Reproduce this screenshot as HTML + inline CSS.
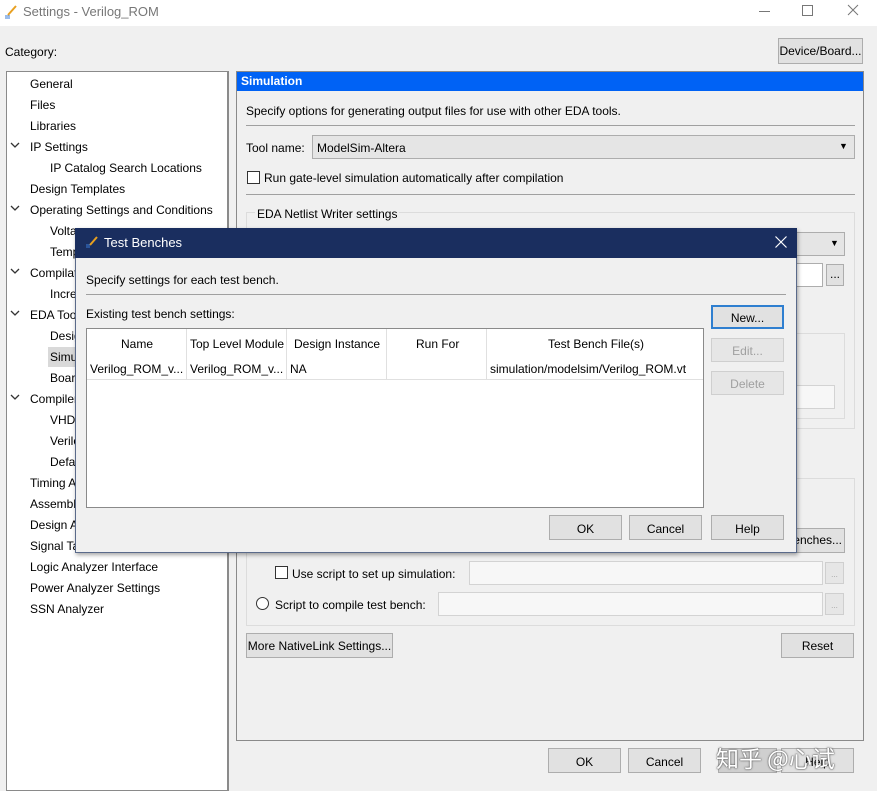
<!DOCTYPE html>
<html><head><style>
*{box-sizing:border-box;margin:0;padding:0}
body{width:877px;height:791px;background:#f0f0f0;font-family:"Liberation Sans","Noto Sans CJK SC",sans-serif;font-size:12px;color:#000;position:relative;overflow:hidden}
.a{position:absolute;white-space:nowrap}
.btn{position:absolute;background:#e1e1e1;border:1px solid #adadad;text-align:center;font-size:12px}
.dis{color:#a0a0a0;background:#e6e6e6;border-color:#cfcfcf}
.fld{position:absolute;background:#f7f7f7;border:1px solid #d3d3d3}
.chk{position:absolute;width:13px;height:13px;border:1px solid #333;background:#fff}
.tree div{position:absolute;white-space:nowrap}
</style></head><body>
<div class="a" style="left:0;top:0;width:877px;height:26px;background:#fff"></div>
<svg class="a" style="left:3px;top:3px" width="16" height="16"><path d="M5 12 L13 3" stroke="#e8a020" stroke-width="2"/><path d="M2 13h5M2 15h5" stroke="#3a7bd5" stroke-width="1"/></svg>
<div class="a" style="left:23px;top:4px;font-size:13px;color:#777">Settings - Verilog_ROM</div>
<svg class="a" style="left:750px;top:0" width="127" height="24"><g stroke="#777" stroke-width="1" fill="none"><path d="M9 11.5h11"/><rect x="52.5" y="5.5" width="10" height="10"/><path d="M98 5l10 10M108 5l-10 10"/></g></svg>
<div class="a" style="left:5px;top:45px">Category:</div>
<div class="btn" style="left:778px;top:38px;width:85px;height:26px;line-height:24px">Device/Board...</div>

<div class="a tree" style="left:6px;top:71px;width:223px;height:720px;background:#fff;border:1px solid #8a8a8a;border-right-width:2px">
<div style="left:23px;top:5px">General</div>
<div style="left:23px;top:26px">Files</div>
<div style="left:23px;top:47px">Libraries</div>
<div style="left:23px;top:68px">IP Settings</div>
<div style="left:43px;top:89px">IP Catalog Search Locations</div>
<div style="left:23px;top:110px">Design Templates</div>
<div style="left:23px;top:131px">Operating Settings and Conditions</div>
<div style="left:43px;top:152px">Voltage</div>
<div style="left:43px;top:173px">Temperature</div>
<div style="left:23px;top:194px">Compilation</div>
<div style="left:43px;top:215px">Incremental</div>
<div style="left:23px;top:236px">EDA Tool</div>
<div style="left:43px;top:257px">Design</div>
<div style="left:41px;top:275px;width:40px;height:20px;background:#d9d9d9"></div>
<div style="left:43px;top:278px">Simulation</div>
<div style="left:43px;top:299px">Board</div>
<div style="left:23px;top:320px">Compiler</div>
<div style="left:43px;top:341px">VHDL</div>
<div style="left:43px;top:362px">Verilog</div>
<div style="left:43px;top:383px">Default</div>
<div style="left:23px;top:404px">Timing Analyzer</div>
<div style="left:23px;top:425px">Assembler</div>
<div style="left:23px;top:446px">Design Assistant</div>
<div style="left:23px;top:467px">Signal Tap</div>
<div style="left:23px;top:488px">Logic Analyzer Interface</div>
<div style="left:23px;top:509px">Power Analyzer Settings</div>
<div style="left:23px;top:530px">SSN Analyzer</div>
</div>
<svg class="a" style="left:10px;top:140px" width="12" height="280"><g stroke="#333" fill="none" stroke-width="1.3"><path d="M1 3l4 4 4-4"/><path d="M1 66l4 4 4-4"/><path d="M1 129l4 4 4-4"/><path d="M1 171l4 4 4-4"/><path d="M1 255l4 4 4-4"/></g></svg>

<div class="a" style="left:236px;top:71px;width:628px;height:670px;border:1px solid #8a8a8a;background:#f0f0f0"></div>
<div class="a" style="left:237px;top:72px;width:626px;height:19px;background:#0062f5;color:#fff;font-weight:bold;padding-left:4px;line-height:19px">Simulation</div>
<div class="a" style="left:246px;top:104px">Specify options for generating output files for use with other EDA tools.</div>
<div class="a" style="left:246px;top:125px;width:609px;height:1px;background:#a0a0a0"></div>
<div class="a" style="left:246px;top:141px">Tool name:</div>
<div class="a" style="left:312px;top:135px;width:543px;height:24px;background:#e5e5e5;border:1px solid #adadad;padding:5px 4px">ModelSim-Altera</div>
<div class="a" style="left:839px;top:141px;font-size:9px">▼</div>
<div class="chk" style="left:247px;top:171px"></div>
<div class="a" style="left:264px;top:171px">Run gate-level simulation automatically after compilation</div>
<div class="a" style="left:246px;top:194px;width:609px;height:1px;background:#a0a0a0"></div>
<div class="a" style="left:246px;top:212px;width:609px;height:217px;border:1px solid #dcdcdc"></div>
<div class="a" style="left:255px;top:207px;background:#f0f0f0;padding:0 2px">EDA Netlist Writer settings</div>
<div class="a" style="left:790px;top:232px;width:55px;height:24px;background:#e5e5e5;border:1px solid #adadad"></div>
<div class="a" style="left:830px;top:238px;font-size:9px">▼</div>
<div class="a" style="left:790px;top:263px;width:33px;height:24px;background:#fff;border:1px solid #adadad"></div>
<div class="btn" style="left:826px;top:264px;width:18px;height:22px;line-height:18px">...</div>
<div class="a" style="left:790px;top:333px;width:55px;height:86px;border:1px solid #dcdcdc"></div>
<div class="fld" style="left:790px;top:385px;width:45px;height:24px"></div>
<div class="a" style="left:246px;top:478px;width:609px;height:148px;border:1px solid #dcdcdc"></div>
<div class="btn" style="left:790px;top:528px;width:55px;height:25px;line-height:23px;text-align:right;padding-right:2px">enches...</div>
<div class="chk" style="left:275px;top:566px"></div>
<div class="a" style="left:292px;top:567px">Use script to set up simulation:</div>
<div class="fld" style="left:469px;top:561px;width:354px;height:24px"></div>
<div class="btn dis" style="left:825px;top:562px;width:19px;height:22px;font-size:8px;line-height:24px">...</div>
<div class="a" style="left:256px;top:597px;width:13px;height:13px;border:1px solid #333;border-radius:50%;background:#fff"></div>
<div class="a" style="left:275px;top:598px">Script to compile test bench:</div>
<div class="fld" style="left:438px;top:592px;width:385px;height:24px"></div>
<div class="btn dis" style="left:825px;top:593px;width:19px;height:22px;font-size:8px;line-height:24px">...</div>
<div class="btn" style="left:246px;top:633px;width:147px;height:25px;line-height:25px">More NativeLink Settings...</div>
<div class="btn" style="left:781px;top:633px;width:73px;height:25px;line-height:25px">Reset</div>

<div class="btn" style="left:548px;top:748px;width:73px;height:25px;line-height:26px">OK</div>
<div class="btn" style="left:628px;top:748px;width:73px;height:25px;line-height:26px">Cancel</div>
<div class="btn" style="left:718px;top:748px;width:59px;height:25px;background:#cfcfcf"></div>
<div class="btn" style="left:781px;top:748px;width:73px;height:25px;line-height:26px">Help</div>
<div class="a" style="left:716px;top:740px;font-size:23px;color:#fff;text-shadow:0 0 2px #555,0 0 1px #333;font-family:'Noto Sans CJK SC',sans-serif">知乎 @心试</div>

<!-- dialog -->
<div class="a" style="left:75px;top:228px;width:722px;height:325px;background:#f0f0f0;border:1px solid #5a6a8a;box-shadow:1px 2px 4px rgba(0,0,0,.35)"></div>
<div class="a" style="left:75px;top:228px;width:722px;height:30px;background:#1a2e5f"></div>
<svg class="a" style="left:84px;top:233px" width="16" height="16"><path d="M6 12 L13 4" stroke="#e8a020" stroke-width="2"/><path d="M2 12h4M2 14h4" stroke="#3a7bd5" stroke-width="1"/></svg>
<div class="a" style="left:104px;top:235px;color:#fff;font-size:13px">Test Benches</div>
<svg class="a" style="left:774px;top:235px" width="14" height="14"><path d="M1.5 1.5l11 11M12.5 1.5l-11 11" stroke="#fff" stroke-width="1.2"/></svg>
<div class="a" style="left:86px;top:273px">Specify settings for each test bench.</div>
<div class="a" style="left:86px;top:294px;width:700px;height:1px;background:#a0a0a0"></div>
<div class="a" style="left:86px;top:307px">Existing test bench settings:</div>
<div class="a" style="left:86px;top:328px;width:618px;height:180px;background:#fff;border:1px solid #8a8a8a"></div>
<div class="a" style="left:87px;top:379px;width:616px;height:1px;background:#e0e0e0"></div>
<div class="a" style="left:186px;top:329px;width:1px;height:50px;background:#e0e0e0"></div>
<div class="a" style="left:286px;top:329px;width:1px;height:50px;background:#e0e0e0"></div>
<div class="a" style="left:386px;top:329px;width:1px;height:50px;background:#e0e0e0"></div>
<div class="a" style="left:486px;top:329px;width:1px;height:50px;background:#e0e0e0"></div>
<div class="a" style="left:121px;top:337px">Name</div>
<div class="a" style="left:190px;top:337px">Top Level Module</div>
<div class="a" style="left:294px;top:337px">Design Instance</div>
<div class="a" style="left:416px;top:337px">Run For</div>
<div class="a" style="left:548px;top:337px">Test Bench File(s)</div>
<div class="a" style="left:90px;top:362px">Verilog_ROM_v...</div>
<div class="a" style="left:190px;top:362px">Verilog_ROM_v...</div>
<div class="a" style="left:290px;top:362px">NA</div>
<div class="a" style="left:490px;top:362px">simulation/modelsim/Verilog_ROM.vt</div>
<div class="btn" style="left:711px;top:305px;width:73px;height:24px;line-height:22px;border:2px solid #2f7fd0">New...</div>
<div class="btn dis" style="left:711px;top:338px;width:73px;height:24px;line-height:24px">Edit...</div>
<div class="btn dis" style="left:711px;top:371px;width:73px;height:24px;line-height:24px">Delete</div>
<div class="btn" style="left:549px;top:515px;width:73px;height:25px;line-height:26px">OK</div>
<div class="btn" style="left:629px;top:515px;width:73px;height:25px;line-height:26px">Cancel</div>
<div class="btn" style="left:711px;top:515px;width:73px;height:25px;line-height:26px">Help</div>
</body></html>
